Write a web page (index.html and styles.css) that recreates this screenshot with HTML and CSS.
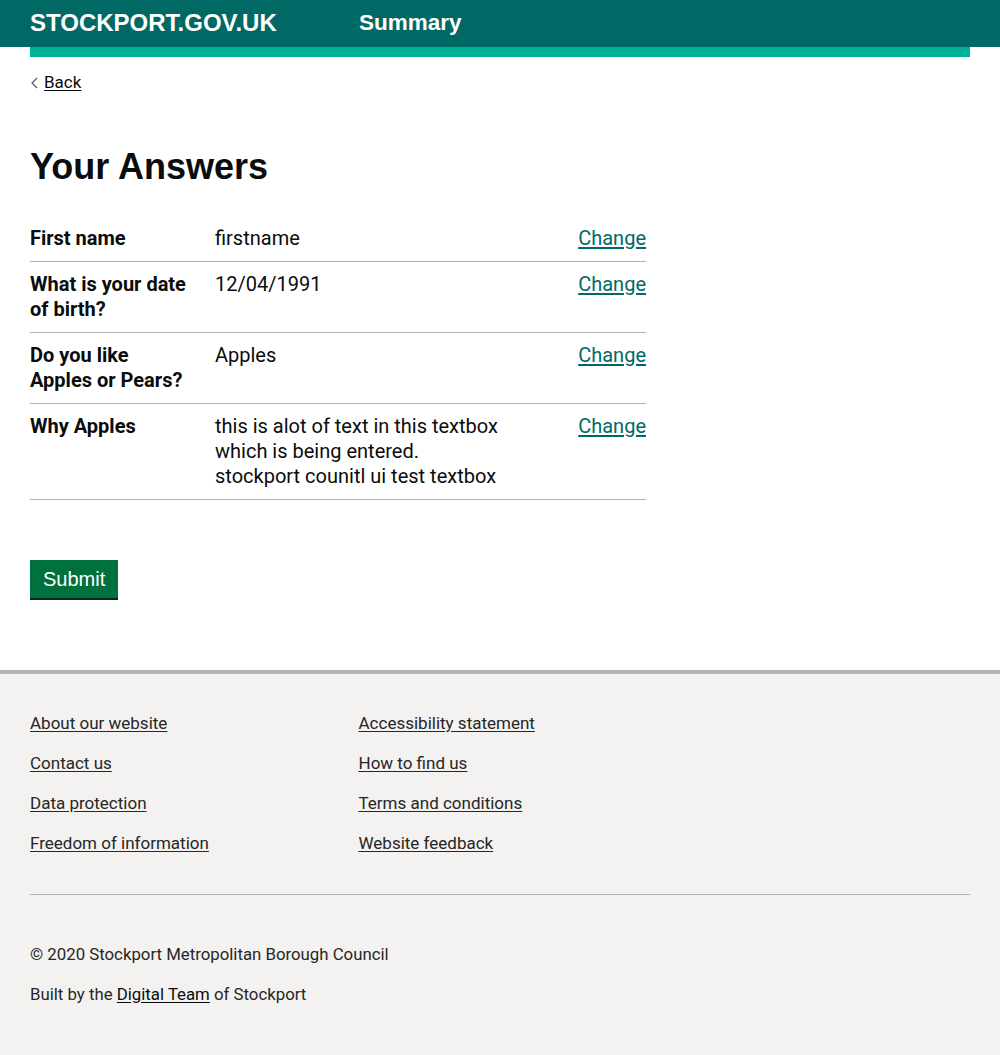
FILE: index.html
```html
<!DOCTYPE html>
<html lang="en">
<head>
<meta charset="utf-8">
<title>Summary</title>
<link rel="stylesheet" href="styles.css">
</head>
<body>
<header class="site-header">
  <div class="header-inner">
    <span class="logo">STOCKPORT.GOV.UK</span>
    <span class="service">Summary</span>
  </div>
</header>
<div class="accent-bar"></div>
<main class="main">
  <a class="back" href="#"><svg class="chev" width="7" height="12" viewBox="0 0 7 12"><path d="M6 1 L1 6 L6 11" fill="none" stroke="#505a5f" stroke-width="1.2"/></svg><span>Back</span></a>
  <h1 class="title">Your Answers</h1>
  <dl class="summary">
    <div class="row">
      <dt class="key">First name</dt>
      <dd class="value">firstname</dd>
      <dd class="action"><a href="#">Change</a></dd>
    </div>
    <div class="row">
      <dt class="key">What is your date of birth?</dt>
      <dd class="value">12/04/1991</dd>
      <dd class="action"><a href="#">Change</a></dd>
    </div>
    <div class="row">
      <dt class="key">Do you like Apples or Pears?</dt>
      <dd class="value">Apples</dd>
      <dd class="action"><a href="#">Change</a></dd>
    </div>
    <div class="row">
      <dt class="key">Why Apples</dt>
      <dd class="value">this is alot of text in this textbox<br>which is being entered.<br>stockport counitl ui test textbox</dd>
      <dd class="action"><a href="#">Change</a></dd>
    </div>
  </dl>
  <button class="submit">Submit</button>
</main>
<footer class="footer">
  <div class="footer-inner">
    <ul class="footer-links">
      <li><a href="#">About our website</a></li>
      <li><a href="#">Accessibility statement</a></li>
      <li><a href="#">Contact us</a></li>
      <li><a href="#">How to find us</a></li>
      <li><a href="#">Data protection</a></li>
      <li><a href="#">Terms and conditions</a></li>
      <li><a href="#">Freedom of information</a></li>
      <li><a href="#">Website feedback</a></li>
    </ul>
    <hr class="footer-rule">
    <p class="copy">© 2020 Stockport Metropolitan Borough Council</p>
    <p class="copy">Built by the <a href="#">Digital Team</a> of Stockport</p>
  </div>
</footer>
</body>
</html>
```
FILE: styles.css
```css
* { box-sizing: border-box; }
html, body { margin: 0; padding: 0; }
body {
  font-family: Roboto, "Liberation Sans", Arial, sans-serif;
  color: #0b0c0c;
  background: #fff;
}
.site-header {
  background: #006966;
  height: 47px;
}
.header-inner {
  padding: 0 30px;
  display: flex;
  align-items: center;
  height: 46px;
}
.logo {
  font-family: "Liberation Sans", Arial, sans-serif;
  font-weight: 700;
  font-size: 24px;
  color: #fff;
  width: 329px;
}
.service {
  font-family: "Liberation Sans", Arial, sans-serif;
  font-weight: 700;
  font-size: 22.5px;
  color: #fff;
}
.accent-bar {
  margin: 0 30px;
  height: 10px;
  background: #00b398;
}
.main {
  padding: 0 30px 72px;
}
.back {
  display: inline-flex;
  align-items: center;
  gap: 6px;
  margin-top: 15px;
  color: #0b0c0c;
  font-size: 17px;
  line-height: 20px;
  text-decoration: none;
}
.back span { text-decoration: underline; text-underline-offset: 2px; }
.chev { margin-left: 1px; margin-top: 1px; }
.title {
  font-family: "Liberation Sans", Arial, sans-serif;
  font-size: 36px;
  font-weight: 700;
  line-height: 40px;
  margin: 54px 0 29px;
}
.summary {
  margin: 0;
  width: 616px;
  font-size: 20px;
  line-height: 25px;
}
.row {
  display: flex;
  border-bottom: 1px solid #b1b4b6;
  padding: 10px 0;
}
.key {
  width: 185px;
  font-weight: 700;
  padding-right: 25px;
}
.value {
  margin: 0;
  flex: 1;
  color: #0b0c0c;
}
.action {
  margin: 0;
  text-align: right;
}
.action a {
  color: #006966;
  text-decoration: underline;
  text-underline-offset: 2px;
}
.submit {
  margin-top: 60px;
  background: #00703c;
  color: #fff;
  border: none;
  box-shadow: 0 2px 0 #002d18;
  font-family: "Liberation Sans", Arial, sans-serif;
  font-size: 20px;
  line-height: 25px;
  padding: 7px 13px 6px;
  height: 38px;
  cursor: pointer;
}
.footer {
  background: #f3f2f1;
  border-top: 4px solid #b1b4b6;
  padding: 39px 30px 46px;
}
.footer-links {
  list-style: none;
  margin: 0;
  padding: 0;
  display: grid;
  grid-template-columns: 328.5px 1fr;
  row-gap: 20px;
}
.footer-links li {
  font-size: 17px;
  line-height: 20px;
}
.footer-links a, .copy a {
  color: #0b0c0c;
  text-decoration: underline;
  text-underline-offset: 2px;
}
.footer-links a { color: #262626; }
.footer-rule {
  border: none;
  border-top: 1px solid #b1b4b6;
  margin: 41px 0 49px;
}
.copy {
  margin: 0 0 20px;
  font-size: 16.8px;
  line-height: 20px;
  color: #262626;
}
```
